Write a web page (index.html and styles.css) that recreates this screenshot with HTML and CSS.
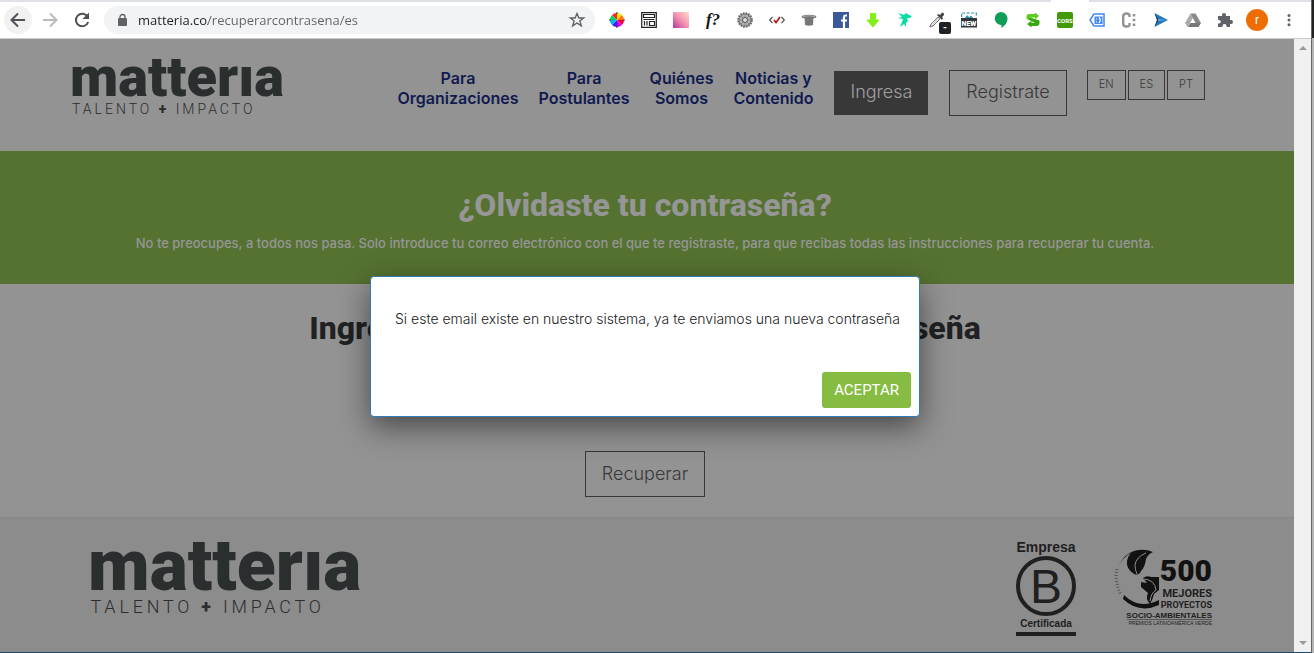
FILE: index.html
```html
<!DOCTYPE html>
<html lang="es">
<head>
<meta charset="utf-8">
<title>Matteria - Recuperar contraseña</title>
<link rel="stylesheet" href="styles.css">
</head>
<body>
<div class="window">
  <div class="tabstrip"><span class="tab-active"></span></div>
  <div class="toolbar">
    <button class="tool back" aria-label="Atrás"><svg viewBox="0 0 20 20" width="20" height="20"><path d="M17 10H4M10 3.500L3.500 10L10 16.500" fill="none" stroke="#4d5156" stroke-width="2"/></svg></button>
    <button class="tool" aria-label="Adelante"><svg viewBox="0 0 20 20" width="20" height="20"><path d="M3 10H16M10 3.500L16.500 10L10 16.500" fill="none" stroke="#b9bbbe" stroke-width="2"/></svg></button>
    <button class="tool" aria-label="Recargar"><svg viewBox="0 0 20 20" width="20" height="20"><path d="M15.500 6.500A6.300 6.300 0 1 0 16.200 12" fill="none" stroke="#4d5156" stroke-width="2"/><path d="M17 2.500V9H10.500Z" fill="#4d5156"/></svg></button>
    <div class="omnibox">
      <svg viewBox="0 0 10 12" width="10" height="12"><rect y="4" width="9" height="8" rx="1" fill="#5f6368"/><path d="M2 5V3a2.500 2.500 0 0 1 5 0V5" fill="none" stroke="#5f6368" stroke-width="1.300"/></svg>
      <input class="url" type="text" aria-label="Dirección" value="matteria.co/recuperarcontrasena/es">
      <button class="star" aria-label="Favorito"><svg viewBox="0 0 16 16" width="16" height="16"><path d="M8 1.500L9.900 6H14.600L10.900 9L12.300 13.800L8 11L3.700 13.800L5.100 9L1.400 6H6.100Z" fill="none" stroke="#5f6368" stroke-width="1.400"/></svg></button>
    </div>
    <div class="extensions">
      <button class="tool" aria-label="Colores"><svg viewBox="0 0 16 16" width="16" height="16"><g transform="translate(8 8)"><path d="M0 0V-7A7 7 0 0 1 5 -5Z" fill="#f8e400"/><path d="M0 0L5 -5A7 7 0 0 1 7 0Z" fill="#ff7a00"/><path d="M0 0H7A7 7 0 0 1 5 5Z" fill="#f00038"/><path d="M0 0L5 5A7 7 0 0 1 0 7Z" fill="#d800e8"/><path d="M0 0V7A7 7 0 0 1 -5 5Z" fill="#3820ff"/><path d="M0 0L-5 5A7 7 0 0 1 -7 0Z" fill="#00b8f0"/><path d="M0 0H-7A7 7 0 0 1 -5 -5Z" fill="#00d860"/><path d="M0 0L-5 -5A7 7 0 0 1 0 -7Z" fill="#ff2020"/><path d="M0 -8V-6M0 6V8M-8 0H-6M6 0H8" stroke="#333"/></g></svg></button>
      <button class="tool" aria-label="Maqueta"><svg viewBox="0 0 16 16" width="16" height="16"><path d="M.7 .7H15.300V15.300H.7ZM2.500 2.500H13.500V5.500H2.500ZM2.500 7.500H13.500M3.500 9V13.500M6 9V13.500M8.500 9.500H13.500V13.500H8.500Z" fill="none" stroke="#222" stroke-width="1.200"/></svg></button>
      <button class="tool" aria-label="Degradado"><svg viewBox="0 0 16 16" width="16" height="16"><defs><linearGradient id="pink" x1="0" y1="1" x2="1" y2="0"><stop offset="0" stop-color="#b3369b"/><stop offset=".5" stop-color="#f593b3"/><stop offset="1" stop-color="#ffdcc5"/></linearGradient></defs><rect width="16" height="16" rx="1" fill="url(#pink)"/></svg></button>
      <button class="tool fontq" aria-label="Tipografía">f?</button>
      <button class="tool" aria-label="Ajustes"><svg viewBox="0 0 16 16" width="16" height="16"><circle cx="8" cy="8" r="6.800" fill="#aaa" stroke="#666" stroke-width="2" stroke-dasharray="1.700 1"/><circle cx="8" cy="8" r="5.800" fill="#b5b5b5" stroke="#777" stroke-width=".8"/><circle cx="8" cy="8" r="2.500" fill="#ddd" stroke="#555"/><path d="M8 2.500V5M8 11V13.500M2.500 8H5M11 8H13.500M4 4L6 6M10 10L12 12M12 4L10 6M6 10L4 12" stroke="#888"/></svg></button>
      <button class="tool" aria-label="Validar código"><svg viewBox="0 0 16 16" width="16" height="16"><path d="M3.500 5L.7 8L3.500 11M12.500 5L15.300 8L12.500 11" fill="none" stroke="#555" stroke-width="1.200"/><path d="M5 8L7 10.500L11 5" fill="none" stroke="#b71c1c" stroke-width="1.800"/></svg></button>
      <button class="tool" aria-label="Sombrero"><svg viewBox="0 0 16 16" width="16" height="16"><path d="M.5 4Q8 1.500 15.500 4L14.500 6Q8 7 1.500 6Z" fill="#777"/><path d="M3.500 5H12.500L12 13Q8 14.500 4 13Z" fill="#777"/><path d="M2 4.500Q8 3 14 4.500" stroke="#aaa" fill="none"/></svg></button>
      <button class="tool" aria-label="Facebook"><svg viewBox="0 0 16 16" width="16" height="16"><rect width="16" height="16" fill="#3b5998"/><path d="M14 3.500H12.800Q11 3.500 11 5.500V16M8 8.500H14" fill="none" stroke="#fff" stroke-width="2.200"/></svg></button>
      <button class="tool" aria-label="Descargar"><svg viewBox="0 0 16 16" width="16" height="16"><path d="M5.500 1.500H10.500V8H14L8 15L2 8H5.500Z" fill="#83ee18" stroke="#83ee18" stroke-linejoin="round"/></svg></button>
      <button class="tool" aria-label="Hada"><svg viewBox="0 0 16 16" width="16" height="16"><path d="M1 1L7 3L9 1L12 3L15 4L13 6H10L11 9L9 11V15L7 12L3 15L5 10L6 7L1 6L5 5Z" fill="#08dba3"/></svg></button>
      <button class="tool" aria-label="Cuentagotas"><svg viewBox="0 0 16 16" width="16" height="16"><path d="M1 15L2 12L9 5L11 7L4 14Z" fill="#ddd" stroke="#777"/><path d="M8 3L13 8L14 6L13 5L15 3Q15.500 1 13 .5L11 3L9.500 2Z" fill="#444"/></svg><span class="picker-badge">-</span></button>
      <button class="tool" aria-label="Novedades"><svg viewBox="0 0 16 16" width="16" height="16"><path d="M.7 5V1H15.300V5" fill="none" stroke="#2b91a3" stroke-width="1.200" stroke-dasharray="3 1.500"/><path d="M4 6L6 3.500H7L8 5.500L10 3.500L12 6Z" fill="#2b91a3"/><rect y="6" width="16" height="9.500" fill="#30383c"/><text class="new-text" x="8" y="13.500">NEW</text></svg></button>
      <button class="tool" aria-label="Mensajes"><svg viewBox="0 0 16 16" width="16" height="16"><path d="M8 0a6.500 6.500 0 0 1 6.500 6.500C14.500 11 11.500 14 8.500 16V13A6.500 6.500 0 1 1 8 0Z" fill="#0f9d58"/></svg></button>
      <button class="tool" aria-label="Sincronizar"><svg viewBox="0 0 16 16" width="16" height="16"><path d="M1.500 7V4.500Q1.500 2 4.500 2H10V.5L14 4L10 7.500V5.500H6L13 9.500L10 10.500Z" fill="#5bcb1c"/><path d="M14.500 8.500V11Q14.500 14 11.500 14H6.500V15.500L2 12L6.500 8.800V10.700H10L3 7L6 6Z" fill="#37a80e"/></svg></button>
      <button class="tool" aria-label="CORS"><svg viewBox="0 0 16 16" width="16" height="16"><rect width="16" height="16" rx="2" fill="#429a08"/><text class="cors-text" x="8" y="10.500">CORS</text></svg></button>
      <button class="tool" aria-label="Etiqueta"><svg viewBox="0 0 16 16" width="16" height="16"><path d="M5 2H15V14H5L1 8Z" fill="#fff" stroke="#4285f4" stroke-width="1.500"/><rect x="5.500" y="4.500" width="8" height="7.500" fill="#4285f4"/><path d="M7.500 6.500V7.500M7.500 9.500V10.500M10 5.500Q12.500 8.200 10 11" fill="none" stroke="#fff" stroke-width="1.300"/></svg></button>
      <button class="tool" aria-label="Consola"><svg viewBox="0 0 16 16" width="16" height="16"><path d="M8.500 5V3.500Q8.500 1.500 5.500 1.500T2.200 4V12Q2.200 14.500 5.500 14.500T8.500 12.500V11" fill="none" stroke="#929292" stroke-width="2.400"/><path d="M13 2V4.500M13 6.700V9.300M13 11.500V14" stroke="#929292" stroke-width="2.600"/></svg></button>
      <button class="tool" aria-label="Reproducir"><svg viewBox="0 0 16 16" width="16" height="16"><path d="M1.500 1L15 8L1.500 15L4 8Z" fill="#2678b9"/><path d="M1.500 1L6 8L1.500 15L4 8Z" fill="#123f73"/><path d="M5 7L14 8L5 9Z" fill="#62a9dd"/></svg></button>
      <button class="tool" aria-label="Drive"><svg viewBox="0 0 16 16" width="16" height="16"><path d="M5.500 1.500H10.500L16 11H10.500Z" fill="#888"/><path d="M5.500 1.500L0 11L2.700 15L8 5.800Z" fill="#aaa"/><path d="M5.500 11H16L13.500 15H2.700Z" fill="#777"/></svg></button>
      <button class="tool" aria-label="Extensiones"><svg viewBox="0 0 16 16" width="16" height="16"><path d="M1 4H5V3a2 2 0 0 1 4 0V4H13V8H14a2 2 0 0 1 0 4H13V15H9.500V14a2 2 0 0 0-4 0V15H1V11.500H2a1.800 1.800 0 0 0 0-3.600H1Z" fill="#5f6368"/></svg></button>
      <button class="tool" aria-label="Perfil"><span class="avatar">r</span></button>
      <button class="tool" aria-label="Menú"><svg viewBox="0 0 16 16" width="16" height="16"><g fill="#5f6368"><circle cx="8" cy="3.500" r="1.500"/><circle cx="8" cy="8" r="1.500"/><circle cx="8" cy="12.700" r="1.500"/></g></svg></button>
    </div>
  </div>
  <div class="viewport">
    <div class="page">
      <header class="site-header">
        <a class="brand" href="#" aria-label="Matteria"><svg viewBox="-2 0 216 60" width="216" height="60">
          <text class="brand-word" x="-2" y="39">matterıa</text>
          <text class="brand-tag" x="0" y="57">TALENTO <tspan class="brand-plus">+</tspan> IMPACTO</text>
        </svg></a>
        <nav class="nav">
          <a href="#">Para<br>Organizaciones</a>
          <a href="#">Para<br>Postulantes</a>
          <a href="#">Quiénes<br>Somos</a>
          <a href="#">Noticias y<br>Contenido</a>
        </nav>
        <a class="btn btn-solid" href="#">Ingresa</a>
        <a class="btn" href="#">Registrate</a>
        <div class="langs"><a href="#">EN</a><a href="#">ES</a><a href="#">PT</a></div>
      </header>
      <section class="banner">
        <h1>¿Olvidaste tu contraseña?</h1>
        <p>No te preocupes, a todos nos pasa. Solo introduce tu correo electrónico con el que te registraste, para que recibas todas las instrucciones para recuperar tu cuenta.</p>
      </section>
      <main class="recover">
        <h2>Ingresa tu correo para recuperar tu contraseña</h2>
        <button class="btn" type="submit">Recuperar</button>
      </main>
      <footer class="site-footer">
        <a class="brand" href="#" aria-label="Matteria"><svg viewBox="-2 0 216 60" width="276" height="77">
          <text class="brand-word" x="-2" y="39">matterıa</text>
          <text class="brand-tag" x="0" y="57">TALENTO <tspan class="brand-plus">+</tspan> IMPACTO</text>
        </svg></a>
        <div class="seals">
          <svg viewBox="0 0 64 98" width="64" height="98" role="img" aria-label="Empresa B Certificada">
            <text class="seal-top" x="31" y="12">Empresa</text>
            <circle cx="31" cy="46" r="28" fill="none" stroke="#202020" stroke-width="4"/>
            <text class="seal-b" x="31" y="63">B</text>
            <text class="seal-bottom" x="31" y="87">Certificada</text>
            <rect x="1" y="92" width="60" height="4" fill="#202020"/>
          </svg>
          <svg viewBox="0 0 100 90" width="100" height="90" role="img" aria-label="500 mejores proyectos socio-ambientales">
            <path d="M4 27Q10 14 20 11Q30 8 39 12Q34 14 32 19Q31 27 27 31Q25 36 20 34Q12 29 13 21Q14 16 17 13Q9 17 4 27Z" fill="#121212"/>
            <path d="M32 13Q22 17 21 25Q21 30 23 34" fill="none" stroke="#8c8c8c"/>
            <path d="M29 38Q33 35 37 37L45 37V50L40 54Q39 59 36 64Q31 59 34 53L27 47L27 42L33 43Z" fill="#121212"/>
            <path d="M30 39Q41 40 42 50Q37 53 36 61" fill="none" stroke="#8c8c8c"/>
            <path d="M10 55Q25 70 45 60V65Q25 74 9 59Z" fill="#121212"/>
            <path d="M3 29C1 37 3 47 7 55" fill="none" stroke="#555" stroke-width="3" stroke-dasharray="1 2"/>
            <text class="prize-500" x="98" y="41">500</text>
            <text class="prize-line" x="98" y="57">MEJORES</text>
            <text class="prize-line small" x="98" y="68">PROYECTOS</text>
            <text class="prize-social" x="98" y="78">SOCIO-AMBIENTALES</text>
            <path d="M13 79.500H98" stroke="#333" stroke-width=".6"/>
            <text class="prize-tiny" x="98" y="85">PREMIOS LATINOAMÉRICA VERDE</text>
          </svg>
        </div>
      </footer>
      <div class="dialog" role="dialog" aria-modal="true" aria-labelledby="msg">
        <p id="msg">Si este email existe en nuestro sistema, ya te enviamos una nueva contraseña</p>
        <button class="accept" type="button">ACEPTAR</button>
      </div>
    </div>
    <div class="scrollbar"><i class="arrow up"></i><i class="arrow down"></i></div>
  </div>
</div>
<div class="desktop"></div>
</body>
</html>
```
FILE: styles.css
```css
* { box-sizing: border-box; }
body {
  margin: 0;
  min-height: 100vh;
  display: flex;
  font-family: Roboto, "Liberation Sans", sans-serif;
  background: #939393;
}
h1, h2, p { margin: 0; }
a { color: inherit; text-decoration: none; }
button { font: inherit; border: 0; padding: 0; background: none; cursor: pointer; }
svg { display: block; overflow: visible; }

.window { flex: 1; min-width: 0; display: flex; flex-direction: column; border-bottom: 1px solid #1d4a6b; }
.desktop { width: 3px; background: linear-gradient(#222 38px, #b5b5b5 38px); border-left: 1px solid #666; }

/* Browser toolbar */
.tabstrip { height: 2px; background: #dee1e6; display: flex; justify-content: flex-end; }
.tab-active { width: 38px; margin-right: 222px; background: #fff; }
.toolbar { height: 37px; display: flex; align-items: center; padding: 0 6px 0 2px; background: #fff; border-bottom: 1px solid #c8cacc; }
.tool { width: 32px; height: 32px; display: grid; place-items: center; flex: none; position: relative; }
.back::before { content: ""; position: absolute; inset: 2px; border-radius: 50%; background: #f1f1f1; }
.back svg { position: relative; }
.omnibox { flex: 1; min-width: 0; height: 28px; margin: 0 6px; padding: 0 10px 0 14px; display: flex; align-items: center; gap: 10px; border-radius: 14px; background: #f1f3f4; }
.url {
  flex: 1; min-width: 0; border: 0; padding: 0; outline: 0;
  font: 13px/20px "Open Sans", "Noto Sans", sans-serif;
  color: transparent;
  background: linear-gradient(90deg, #202124 70px, #5f6368 70px);
  -webkit-background-clip: text;
  background-clip: text;
}
.extensions { display: flex; }
.fontq { font: italic bold 17px/20px "Liberation Serif", serif; color: #111; }
.picker-badge { position: absolute; right: 2px; bottom: 2px; width: 12px; height: 12px; border-radius: 2px; background: #202124; color: #fff; font: bold 10px/11px Roboto, sans-serif; }
.new-text { font: 900 7px Roboto, sans-serif; fill: #fff; text-anchor: middle; }
.cors-text { font: bold 6px Roboto, sans-serif; fill: #fff; text-anchor: middle; }
.avatar { width: 22px; height: 22px; border-radius: 50%; background: #ef6c00; color: #fff; font-size: 12px; line-height: 22px; text-align: center; }

/* Page */
.viewport { flex: 1; display: flex; }
.page { flex: 1; min-width: 0; display: flex; flex-direction: column; position: relative; color: #202122; background: #939393; }
.scrollbar { width: 17px; background: #f0f0f0; display: flex; flex-direction: column; justify-content: space-between; align-items: center; padding: 7px 0; }
.arrow { border: 4px solid transparent; }
.arrow.up { border-top: 0; border-bottom-color: #999; }
.arrow.down { border-bottom: 0; border-top-color: #999; }

.site-header { height: 112px; display: flex; align-items: flex-start; padding: 18px 89px 0 70px; }
.brand-word { font: 900 56px Roboto, sans-serif; fill: #2a2e2e; }
.brand-tag { font: 300 14px Roboto, sans-serif; letter-spacing: 3px; fill: #2a2e2e; }
.brand-plus { font-weight: 900; }
.nav { display: flex; gap: 20px; margin: 11px 20px 0 auto; font: 600 16px/20px Inter, sans-serif; text-align: center; color: #111a50; }
.btn {
  height: 46px; padding: 0 16px; border: 1px solid #383838;
  font: 300 18px/42px Inter, sans-serif; color: #383838;
}
.site-header .btn { margin: 13px 20px 0 0; }
.site-header .btn-solid { background: #383838; color: #a0a0a0; border-color: #939393; }
.langs { display: flex; gap: 2px; margin-top: 13px; }
.langs a { height: 30px; padding: 0 11px; border: 1px solid #383838; font: 300 11px/27px Inter, sans-serif; color: #383838; }

.banner { height: 133px; padding: 36px 4px 0 0; background: #557231; color: #969696; text-align: center; }
.banner h1 { font-size: 32px; line-height: 36px; font-weight: 800; }
.banner p { margin-top: 10px; font: 500 13px/20px Inter, sans-serif; }

.recover { flex: 1; display: flex; flex-direction: column; align-items: center; padding: 26px 4px 20px 0; gap: 105px; }
.recover h2 { font-size: 32px; line-height: 36px; font-weight: 800; }

.site-footer { height: 135px; display: flex; justify-content: space-between; align-items: flex-start; padding: 22px 80px 0 88px; background: #8c8c8c; border-top: 1px solid #858585; }
.seals { display: flex; align-items: flex-start; gap: 35px; }
.seals text { text-anchor: middle; fill: #202020; }
.seals .seal-top { font: bold 14px "Liberation Sans", sans-serif; }
.seals .seal-b { font: 48px "Liberation Sans", sans-serif; }
.seals .seal-bottom { font: bold 10px "Liberation Sans", sans-serif; }
.seals .prize-500 { font: 900 30px Roboto, sans-serif; text-anchor: end; fill: #121212; }
.seals .prize-line { font: bold 11px Roboto, sans-serif; text-anchor: end; }
.seals .small { font-size: 9px; }
.seals .prize-social { font: bold 8px "Liberation Sans", sans-serif; text-anchor: end; }
.seals .prize-tiny { font: 5px "Liberation Sans", sans-serif; text-anchor: end; }

.dialog {
  position: absolute; top: 237px; left: 50%; width: 550px; margin-left: -277px;
  display: flex; flex-direction: column; align-items: flex-end;
  padding: 0 8px 8px 24px;
  background: #fff; border: 1px solid #337ab7; border-radius: 4px;
  box-shadow: 0 10px 30px rgba(0, 0, 0, .5);
}
.dialog p { align-self: flex-start; padding: 32px 0 43px; font: 300 14px/20px Inter, sans-serif; }
.accept { height: 36px; padding: 0 12px; border-radius: 3px; background: #86bc42; color: #fff; font-size: 15px; font-weight: 400; }
```
